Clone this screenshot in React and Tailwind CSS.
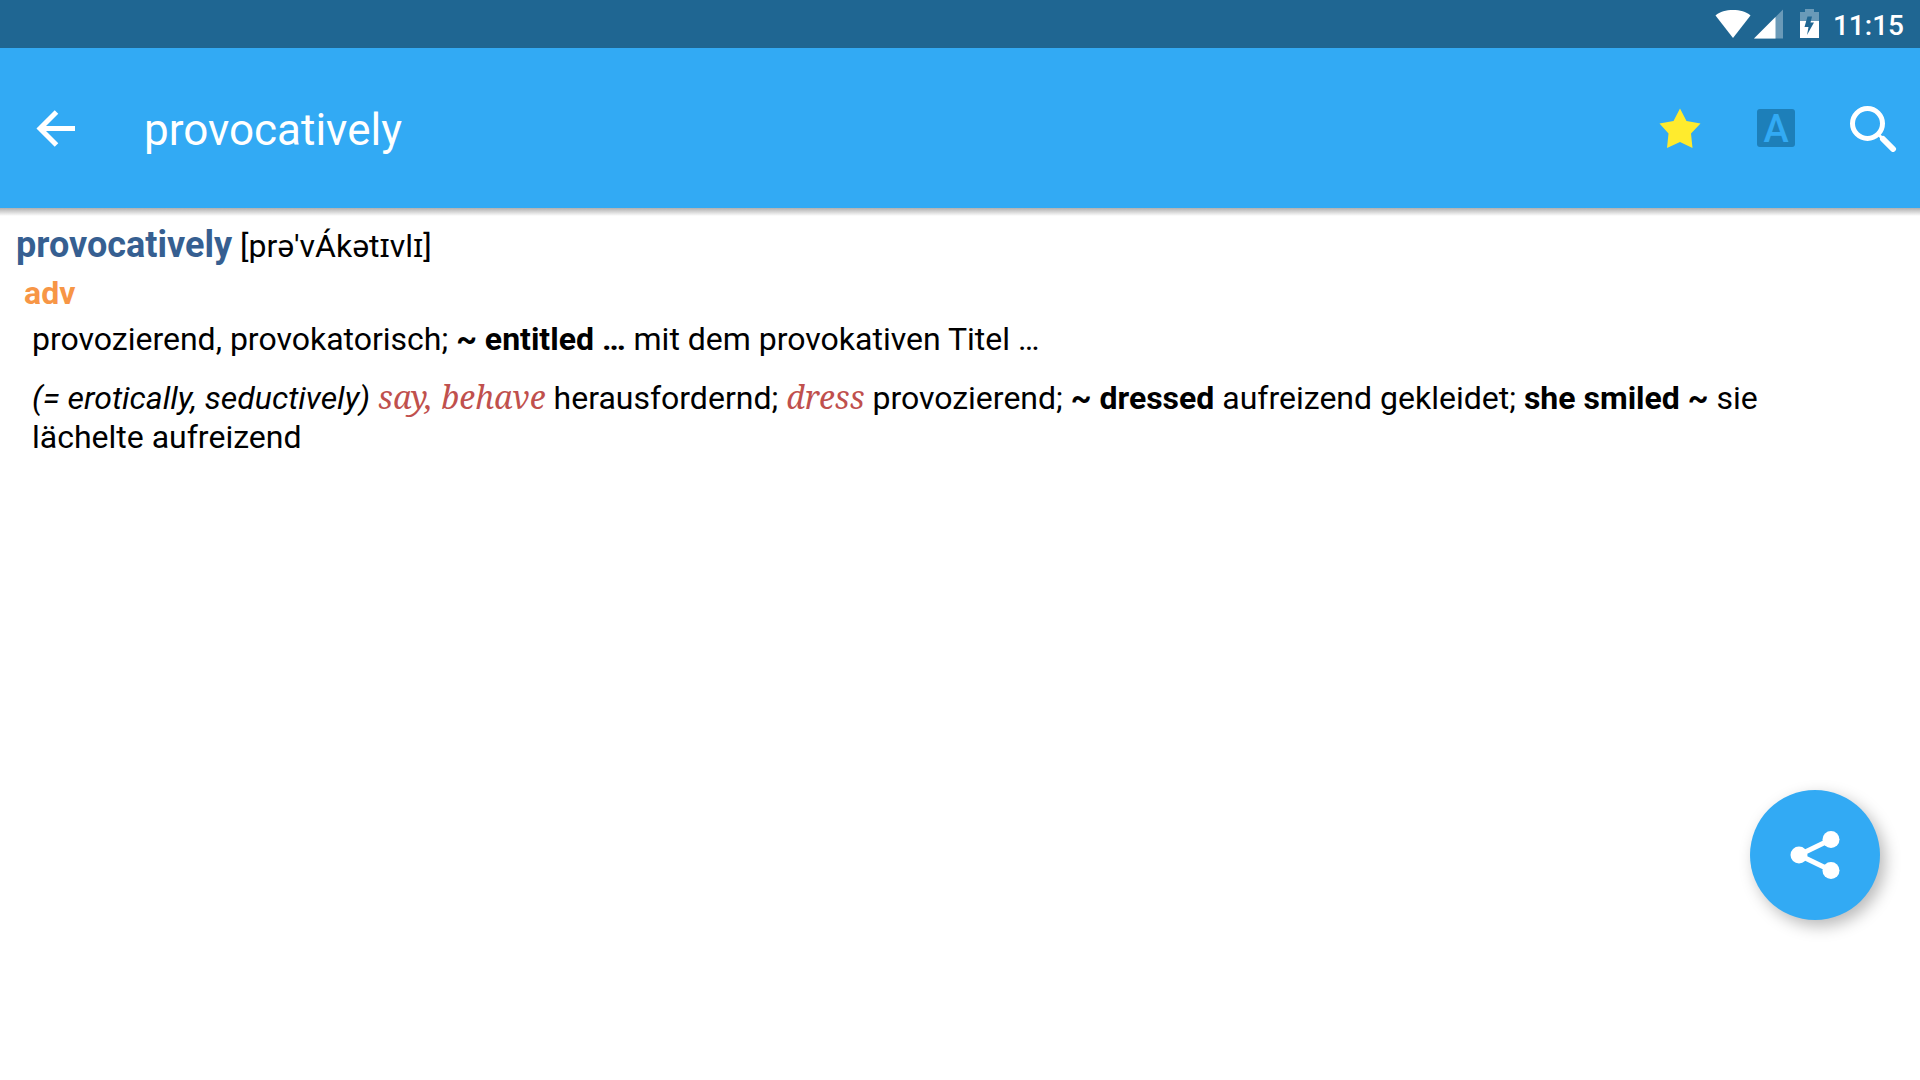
const entry = {
  headword: "provocatively",
  ipa: "[prə'vÁkətɪvlɪ]",
  category: "adv",
};

function WifiIcon() {
  return (
    <svg className="w-[36px] h-[30px]" viewBox="0 0 36 30" fill="#fff" aria-hidden="true">
      <path d="M0.5 6.5C5 2.500 11 1 18 1s13 1.500 17.500 5.500L18 29z" />
    </svg>
  );
}

function SignalIcon() {
  return (
    <svg className="w-[30px] h-[30px]" viewBox="0 0 30 30" aria-hidden="true">
      <path d="M29 0.500v29H0z" fill="#6a9ab8" />
      <path d="M21.500 8V29.500H0z" fill="#fff" />
    </svg>
  );
}

function BatteryIcon() {
  return (
    <svg className="w-[19px] h-[30px]" viewBox="0 0 19 30" aria-hidden="true">
      <path d="M5 0h9v3h5v9H0V3h5z" fill="#6a9ab8" />
      <path d="M0 12h19v17H0z" fill="#fff" />
      <path d="M12 7.500l-1.500 6H14L7 26l1.500-8H4.500L7.500 7.500z" fill="#1f6692" />
    </svg>
  );
}

function BackIcon() {
  return (
    <svg className="w-[40px] h-[40px]" viewBox="0 0 40 40" fill="none" stroke="#fff" strokeWidth="5" aria-hidden="true">
      <path d="M20.500 4L4 20.500l16.500 16.500M4 20.500h35" />
    </svg>
  );
}

function StarIcon() {
  return (
    <svg className="w-[42px] h-[40px]" viewBox="0 0 42 40" fill="#ffeb2d" aria-hidden="true">
      <path d="M21 0.500l6.500 12.500 14 2.500-9.500 10 1.500 14.500L21 34 8 40l1.500-14.500L0.500 15.500l14-2.500z" />
    </svg>
  );
}

function SearchIcon() {
  return (
    <svg className="w-[48px] h-[48px]" viewBox="0 0 48 48" fill="none" stroke="#fff" aria-hidden="true">
      <circle cx="18.500" cy="19.500" r="15" strokeWidth="5" />
      <path d="M34 35l10 10" strokeWidth="6" strokeLinecap="round" />
      <path d="M29 30l5 5" strokeWidth="3" />
    </svg>
  );
}

function ShareIcon() {
  return (
    <svg className="w-[50px] h-[50px]" viewBox="0 0 50 50" aria-hidden="true">
      <path d="M41 9.500L9 25l32 15.500" fill="none" stroke="#fff" strokeWidth="5" />
      <g fill="#fff">
        <circle cx="9" cy="25" r="8.500" />
        <circle cx="41" cy="9.500" r="8.500" />
        <circle cx="41" cy="40.500" r="8.500" />
      </g>
    </svg>
  );
}

function Usage({ children }) {
  return <em className="font-['Noto_Serif',serif] text-[#c0504d]">{children}</em>;
}

export default function App() {
  return (
    <div className="min-h-screen bg-white text-black font-['Roboto','Noto_Sans',sans-serif]">
      {/* Status bar */}
      <div className="flex h-12 items-center justify-end bg-[#1f6692] pr-4 text-white">
        <WifiIcon />
        <div className="ml-[3px]">
          <SignalIcon />
        </div>
        <div className="ml-4">
          <BatteryIcon />
        </div>
        <time className="ml-3.5 pt-1 text-[28px] leading-8 font-medium">11:15</time>
      </div>

      {/* App bar */}
      <header className="flex h-[160px] items-center bg-[#32aaf4] pl-9 pr-[23px] text-white">
        <button type="button" aria-label="Back">
          <BackIcon />
        </button>
        <h1 className="ml-[68px] flex-1 pt-1 text-[44px] leading-[52px]">{entry.headword}</h1>
        <div className="flex items-center">
          <button type="button" aria-label="Favourite">
            <StarIcon />
          </button>
          <button
            type="button"
            aria-label="Highlight"
            className="ml-14 flex h-[38px] w-[38px] items-center justify-center rounded-[3px] bg-[#1d7fb9] pt-0.5 text-[38px] leading-[38px] font-medium text-[#32aaf4]"
          >
            A
          </button>
          <button type="button" aria-label="Search" className="ml-[54px]">
            <SearchIcon />
          </button>
        </div>
      </header>
      <div className="h-2 bg-linear-to-b from-[#b0b0b0] to-white" />

      {/* Entry */}
      <main className="px-4 pt-2 text-[32px] leading-[39px]">
        <h2 className="leading-[42px]">
          <span className="text-[36px] font-bold text-[#365f91]">{entry.headword}</span> {entry.ipa}
        </h2>
        <p className="mt-[7px] pl-2 font-bold text-[#f79646]">{entry.category}</p>
        <div className="mt-[7px] space-y-[18px] px-4">
          <p>
            provozierend, provokatorisch; <b>~ entitled …</b> mit dem provokativen Titel …
          </p>
          <p>
            <i>(= erotically, seductively)</i> <Usage>say, behave</Usage> herausfordernd;{" "}
            <Usage>dress</Usage> provozierend; <b>~ dressed</b> aufreizend gekleidet;{" "}
            <b>she smiled ~</b> sie <span className="whitespace-nowrap">lächelte aufreizend</span>
          </p>
        </div>
      </main>

      <button
        type="button"
        aria-label="Share"
        className="fixed right-10 bottom-40 flex h-[130px] w-[130px] items-center justify-center rounded-full bg-[#32aaf4] shadow-[5px_6px_16px_rgba(0,0,0,0.28)]"
      >
        <ShareIcon />
      </button>
    </div>
  );
}
